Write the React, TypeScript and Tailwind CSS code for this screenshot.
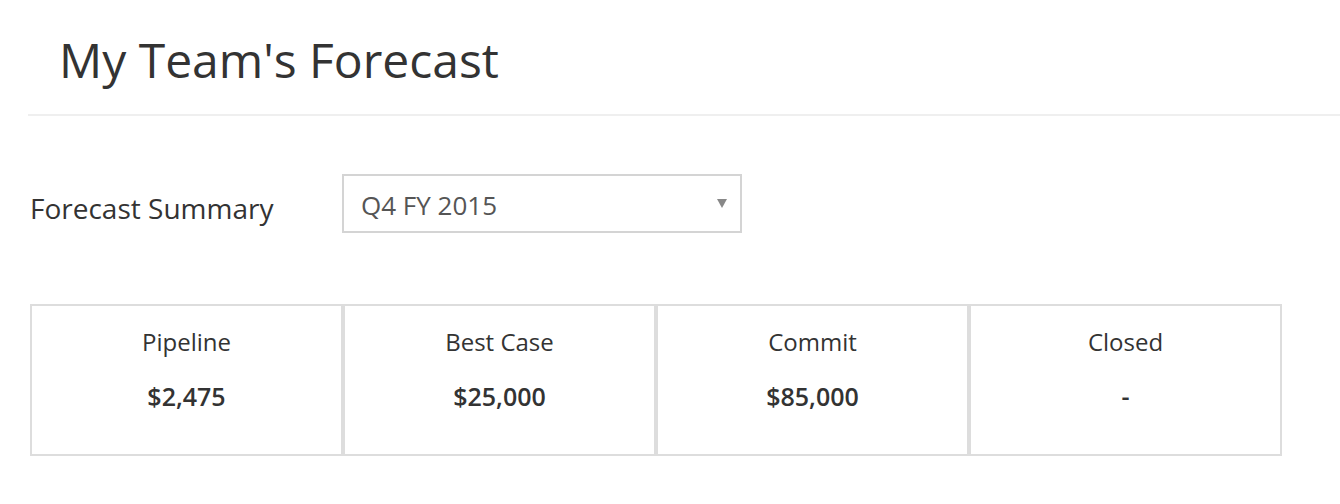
const stats = [
  { label: "Pipeline", value: "$2,475" },
  { label: "Best Case", value: "$25,000" },
  { label: "Commit", value: "$85,000" },
  { label: "Closed", value: "-" },
];

export default function App() {
  return (
    <main className="min-h-[504px] bg-white text-[#333] font-['Open_Sans',sans-serif]">
      {/* Header */}
      <div className="pl-[28px]">
        <h1 className="pl-[31px] pt-[30px] pb-[24px] text-[48px] leading-[60px] font-normal">
          My Team's Forecast
        </h1>
        <div className="h-[2px] bg-[#efefef]" />
      </div>

      {/* Period selector */}
      <div className="flex items-center px-[30px] mt-[58px]">
        <div className="w-[312px] text-[28px] leading-[36px] pt-[9px]">Forecast Summary</div>
        <div className="relative w-[400px] h-[59px] border-2 border-[#d4d4d4] flex items-center pl-[17px] pt-[4px] text-[26px] text-[#555]">
          Q4 FY 2015
          <span className="absolute right-[13px] top-[23px] w-0 h-0 border-x-[5px] border-x-transparent border-t-[9px] border-t-[#888]" />
        </div>
      </div>

      {/* Stat cards */}
      <div className="flex px-[30px] mt-[71px] w-[1312px]">
        {stats.map((s) => (
          <div
            key={s.label}
            className="flex-1 h-[152px] border-2 border-[#dddddd] flex flex-col items-center pt-[20px]"
          >
            <div className="text-[24px] leading-[32px]">{s.label}</div>
            <div className="mt-[22px] text-[25px] leading-[32px] font-semibold">{s.value}</div>
          </div>
        ))}
      </div>
    </main>
  );
}
